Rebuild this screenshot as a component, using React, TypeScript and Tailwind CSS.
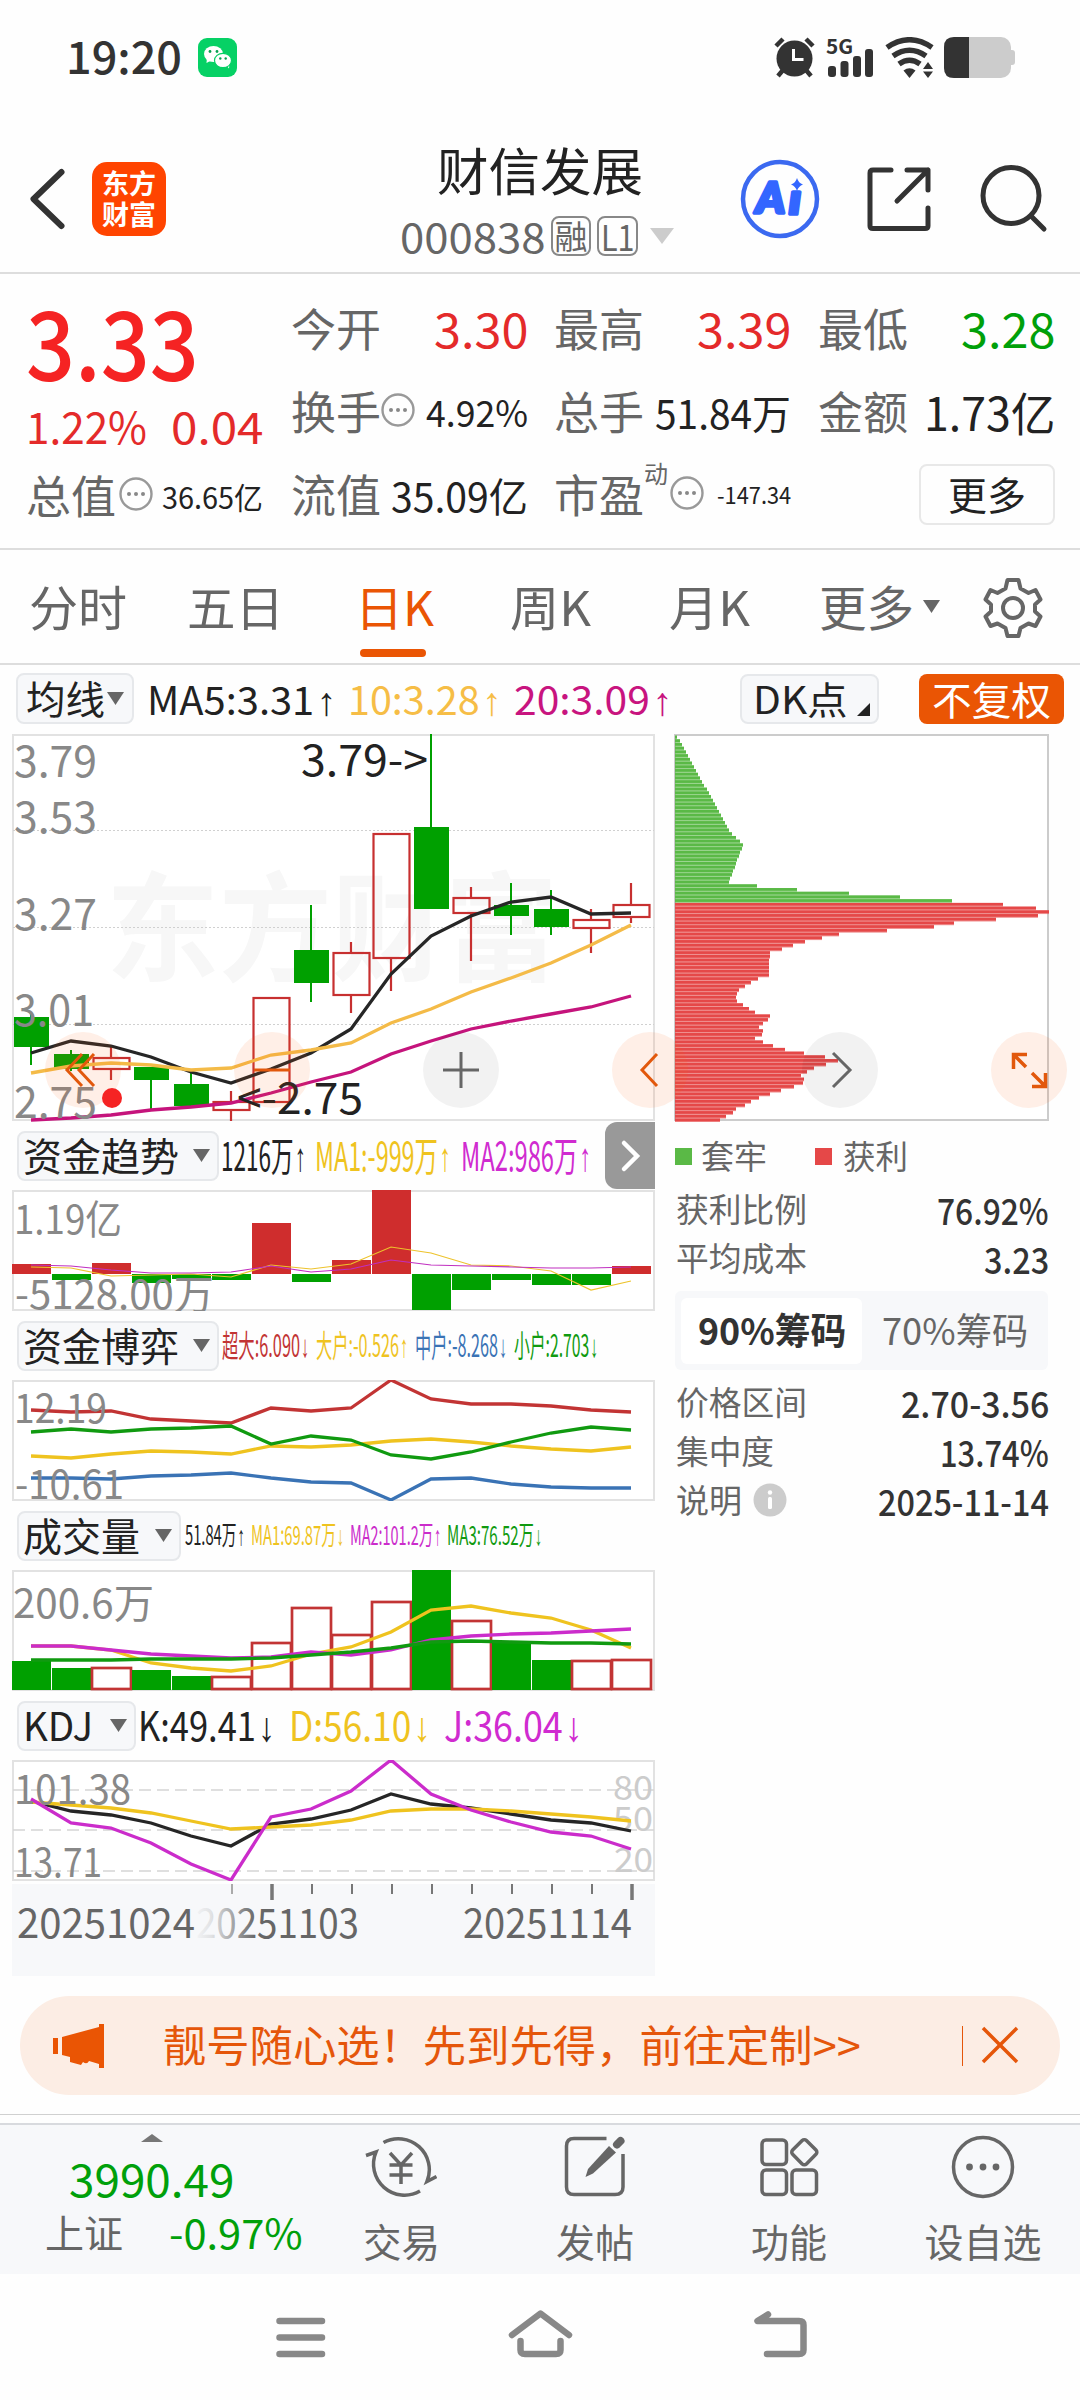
import React, { useLayoutEffect, useRef, useState } from "react";
import clsx from "clsx";

// one trading day every 40px
const STEP = 40;
const FIRST = 19;

// [high, low, top, bottom, up]
const candles: [number, number, number, number, boolean][] = [
  [279, 331, 283, 313, false],
  [316, 337, 320, 335, false],
  [313, 346, 324, 335, true],
  [333, 375, 333, 346, false],
  [336, 372, 350, 372, false],
  [357, 387, 368, 376, true],
  [264, 368, 264, 368, true],
  [171, 268, 216, 249, false],
  [208, 279, 219, 261, true],
  [100, 257, 100, 224, true],
  [0, 175, 93, 175, false],
  [153, 227, 164, 179, true],
  [149, 201, 171, 182, false],
  [156, 201, 175, 193, false],
  [175, 219, 186, 194, true],
  [149, 189, 171, 183, true],
];
const ma5 = [319, 307, 312, 323, 338, 349, 335, 319, 295, 240, 202, 182, 168, 163, 180, 179];
const ma10 = [339, 332, 329, 331, 336, 334, 321, 316, 309, 289, 275, 258, 244, 229, 211, 191];
const ma20 = [386, 384, 381, 376, 373, 369, 359, 348, 338, 320, 307, 295, 287, 280, 273, 262];

const flow = [10, -6, 11, -9, -5, -6, 51, -8, 14, 84, -36, -16, -6, -11, -11, 8];
const flowMa1 = [77, 78, 86, 85, 84, 87, 75, 79, 74, 57, 63, 75, 76, 81, 100, 91];
const flowMa2 = [75, 76, 80, 83, 83, 82, 76, 82, 79, 70, 75, 76, 77, 78, 78, 77];

const superBig = [30, 32, 31, 39, 41, 43, 28, 31, 28, 0, 19, 24, 24, 26, 30, 32];
const small = [52, 49, 52, 49, 48, 46, 64, 56, 60, 75, 79, 72, 62, 53, 47, 50];
const big = [76, 78, 74, 71, 72, 74, 66, 67, 65, 61, 59, 62, 66, 69, 71, 67];
const middle = [98, 98, 99, 96, 95, 93, 98, 102, 103, 120, 99, 98, 104, 107, 108, 108];

const volume = [91, 98, 97, 100, 106, 106, 72, 37, 64, 31, 0, 50, 72, 90, 90, 89];
const volMa1 = [76, 76, 80, 93, 98, 101, 96, 84, 77, 62, 40, 36, 43, 48, 60, 78];
const volMa2 = [76, 76, 80, 84, 86, 88, 87, 82, 85, 80, 70, 66, 64, 63, 61, 59];
const volMa3 = [90, 90, 90, 89, 89, 89, 88, 85, 82, 78, 72, 71, 72, 73, 73, 74];
const volUp = [2, 5, 6, 7, 8, 9, 11, 14, 15];

const kLine = [41, 51, 55, 63, 76, 86, 64, 59, 50, 34, 44, 48, 54, 60, 63, 71];
const dLine = [42, 45, 48, 53, 61, 69, 67, 65, 60, 51, 49, 49, 51, 54, 57, 61];
const jLine = [39, 63, 68, 83, 104, 120, 57, 49, 31, 0, 34, 50, 62, 72, 76, 89];

const trapped = [
  2, 5, 7, 9, 11, 13, 15, 17, 19, 21, 23, 25, 27, 29, 32, 34, 36, 38, 40, 42, 44, 46, 48, 50, 52, 54, 57, 61, 65, 68,
  67, 65, 64, 62, 61, 60, 58, 57, 55, 54, 82, 122, 174, 225, 277,
];
const profit = [
  328, 361, 374, 363, 321, 279, 259, 212, 164, 147, 130, 118, 107, 95, 95, 94, 94, 94, 94, 94, 83, 76, 70, 64, 62, 61,
  62, 68, 74, 80, 95, 93, 88, 84, 88, 87, 80, 88, 98, 110, 129, 150, 163, 151, 139, 132, 126, 129, 128, 119, 106, 95,
  84, 76, 70, 61, 58, 51, 45,
];

const points = (values: number[]) => values.map((v, i) => `${FIRST + i * STEP},${v}`).join(" ");

// text squeezed or stretched to the width of its box
const Fit = ({ className, children }: { className: string; children: React.ReactNode }) => {
  const box = useRef<HTMLSpanElement>(null);
  const inner = useRef<HTMLSpanElement>(null);
  const [scale, setScale] = useState(1);
  useLayoutEffect(() => {
    if (box.current && inner.current) {
      setScale(box.current.clientWidth / inner.current.offsetWidth);
    }
  }, []);
  return (
    <span ref={box} className={clsx("inline-flex shrink-0 leading-none whitespace-nowrap", className)}>
      <span
        ref={inner}
        className="inline-block shrink-0 origin-left -translate-y-[0.035em]"
        style={{ transform: `scaleX(${scale})` }}
      >
        {children}
      </span>
    </span>
  );
};

const Arrow = ({ down }: { down?: boolean }) => (
  <span className="ml-[0.06em] font-['Liberation_Sans',sans-serif]">{down ? "↓" : "↑"}</span>
);

const Line = ({ data, color, width = 3.3 }: { data: number[]; color: string; width?: number }) => (
  <polyline points={points(data)} fill="none" stroke={color} strokeWidth={width} />
);

type LabelProps = { x: number; y: number; w: number; size?: number; fill?: string; children: string };
const Label = ({ x, y, w, size = 40, fill = "#888", children }: LabelProps) => (
  <text x={x} y={y} fontSize={size} fill={fill} textLength={w} lengthAdjust="spacingAndGlyphs">
    {children}
  </text>
);

const Down = ({ className = "" }: { className?: string }) => (
  <svg className={clsx("h-[13px] w-[17px] shrink-0", className)} viewBox="0 0 17 13">
    <path d="M0 0H17L8.5 13Z" fill="#666" />
  </svg>
);

const Dots = ({ className = "" }: { className?: string }) => (
  <svg className={clsx("size-[34px] shrink-0", className)} viewBox="0 0 34 34">
    <circle cx="17" cy="17" r="15.5" fill="none" stroke="#999" strokeWidth="2.4" />
    <circle cx="10" cy="17" r="2" fill="#888" />
    <circle cx="17" cy="17" r="2" fill="#888" />
    <circle cx="24" cy="17" r="2" fill="#888" />
  </svg>
);

const StatusBar = () => (
  <div className="flex h-[115px] items-start pt-[37px] text-[#333]">
    <Fit className="-mt-[3px] ml-[66px] w-[116px] text-[45px] font-medium">19:20</Fit>
    <svg className="mt-px ml-[16px] size-[39px]" viewBox="0 0 39 39">
      <rect width="39" height="39" rx="9" fill="#06d165" />
      <path d="M9 19 8.500 25 14 22Z" fill="#fff" />
      <ellipse cx="15.500" cy="16" rx="9.500" ry="8" fill="#fff" />
      <path d="M28 27 31 30.500 31.500 25Z" fill="#fff" />
      <ellipse cx="25" cy="22.500" rx="8.500" ry="7.200" fill="#fff" stroke="#06d165" strokeWidth="1.200" />
      <g fill="#06a04f">
        <circle cx="12" cy="13.500" r="1.400" />
        <circle cx="19" cy="13.500" r="1.400" />
        <circle cx="22.300" cy="20.500" r="1.200" />
        <circle cx="27.700" cy="20.500" r="1.200" />
      </g>
    </svg>
    <svg className="ml-auto h-[41px] w-[41px]" viewBox="0 0 41 41">
      <g stroke="#333" strokeWidth="4.500" fill="none">
        <path d="M2 9 9 2M39 9 32 2M9 33 4 39M32 33 37 39" />
      </g>
      <circle cx="20.500" cy="21.500" r="18" fill="#333" />
      <path d="M19.500 12V22.500H29.500" stroke="#fff" strokeWidth="3" fill="none" />
    </svg>
    <div className="ml-[11px] flex h-[41px] w-[48px] flex-col">
      <Fit className="h-[16px] w-[27px] text-[20px] font-bold">5G</Fit>
      <svg className="-mt-[4px] ml-[2px] h-[28px] w-[46px]" viewBox="0 0 46 28">
        <g fill="#333">
          <rect x="0" y="17" width="8" height="11" rx="3" />
          <rect x="12.500" y="12" width="8" height="16" rx="3" />
          <rect x="25" y="7" width="8" height="21" rx="3" />
          <rect x="37" y="0" width="8" height="28" rx="3" />
        </g>
      </svg>
    </div>
    <svg className="ml-[11px] h-[41px] w-[50px]" viewBox="0 0 50 41">
      <g stroke="#333" strokeWidth="5.500" fill="none">
        <path d="M2 10.500Q24.500-5 47 10.500" />
        <path d="M8 19Q24.500 7.500 41 19" />
        <path d="M14 27Q24.500 19.500 35 27" />
      </g>
      <path d="M18.500 33.500Q24.500 29 30.500 33.500L24.500 41Z" fill="#333" />
      <path d="M38 32 43 25 48 32ZM38 34.500 43 41 48 34.500Z" fill="#333" />
    </svg>
    <svg className="mr-[65px] ml-[9px] h-[41px] w-[71px]" viewBox="0 0 71 41">
      <path d="M66 13h2q3 0 3 3v9q0 3-3 3h-2Z" fill="#ccc" />
      <rect width="67" height="41" rx="10" fill="#ccc" />
      <path d="M25 0H10Q0 0 0 10V31Q0 41 10 41H25Z" fill="#333" />
    </svg>
  </div>
);

const Header = () => (
  <div className="flex h-[159px] items-center border-b-2 border-[#ddd]">
    <svg className="mt-[10px] ml-[28px] h-[64px] w-[38px]" viewBox="0 0 38 64">
      <path
        d="M33.500 5 5.500 32 33.500 59"
        stroke="#333"
        strokeWidth="6"
        strokeLinecap="round"
        strokeLinejoin="round"
        fill="none"
      />
    </svg>
    <div className="mt-[10px] ml-[26px] flex h-[74px] w-[74px] flex-col items-center justify-center gap-[4px] rounded-[15px] bg-[#ff4400] text-white">
      <Fit className="w-[54px] text-[27px] font-bold">东方</Fit>
      <Fit className="w-[54px] text-[27px] font-bold">财富</Fit>
    </div>
    <div className="mt-[15px] ml-[234px] flex w-[276px] flex-col">
      <Fit className="ml-[37px] w-[206px] text-[51px] text-[#222]">财信发展</Fit>
      <div className="mt-[19px] flex h-[40px] items-center text-[#666]">
        <Fit className="w-[146px] text-[41px]">000838</Fit>
        <div className="ml-[5px] flex h-[40px] w-[40px] items-center justify-center rounded-[8px] border-2 border-[#888]">
          <Fit className="w-[33px] text-[33px]">融</Fit>
        </div>
        <div className="ml-[6px] flex h-[40px] w-[41px] items-center justify-center rounded-[8px] border-2 border-[#888]">
          <Fit className="w-[34px] text-[36px]">L1</Fit>
        </div>
        <svg className="ml-[12px] h-[16px] w-[24px]" viewBox="0 0 24 16">
          <path d="M0 0H24L12 16Z" fill="#ccc" />
        </svg>
      </div>
    </div>
    <svg className="mt-[10px] ml-[64px] size-[80px]" viewBox="0 0 80 80">
      <circle cx="40" cy="40" r="37" fill="none" stroke="#3b69f0" strokeWidth="4.500" />
      <g
        fill="#3366ff"
        stroke="#3366ff"
        strokeWidth="3.500"
        strokeLinejoin="round"
        fontFamily="Lato, sans-serif"
        fontWeight="900"
        fontStyle="italic"
      >
        <text x="16" y="54" fontSize="42" textLength="29" lengthAdjust="spacingAndGlyphs">
          A
        </text>
        <text x="49" y="55" fontSize="41" textLength="12" lengthAdjust="spacingAndGlyphs">
          ı
        </text>
      </g>
      <path d="M57 19Q58.500 24 63 25.500 58.500 27 57 32 55.500 27 51 25.500 55.500 24 57 19Z" fill="#3366ff" />
    </svg>
    <svg className="mt-[10px] ml-[46px] h-[66px] w-[66px]" viewBox="0 0 66 66">
      <g fill="none" stroke="#333" strokeWidth="5" strokeLinecap="round" strokeLinejoin="round">
        <path d="M25 4H7Q4 4 4 7V60Q4 62.500 7 62.500H59Q62 62.500 62 60V42" />
        <path d="M41 4H62V24M62 4 31 35" />
      </g>
    </svg>
    <svg className="mt-[10px] ml-[47px] h-[70px] w-[70px]" viewBox="0 0 70 70">
      <g fill="none" stroke="#333" strokeWidth="5" strokeLinecap="round">
        <circle cx="32" cy="31.500" r="28" />
        <path d="M52 52 65 65" />
      </g>
    </svg>
  </div>
);

const Cell = ({ label, extra, children }: { label: string; extra?: React.ReactNode; children: React.ReactNode }) => (
  <div className="flex h-[83px] w-[237px] items-center">
    <Fit className="w-[90px] text-[45px] text-[#666]">{label}</Fit>
    {extra}
    <div className="ml-auto flex text-[#222]">{children}</div>
  </div>
);

const Quote = () => (
  <div className="flex h-[276px] border-b-2 border-[#ddd] pt-[14px]">
    <div className="ml-[26px] flex w-[265px] flex-col">
      <div className="flex h-[109px] items-center">
        <Fit className="w-[173px] text-[96px] font-medium text-[#f52323]">3.33</Fit>
      </div>
      <div className="mt-[3px] mb-px flex h-[54px] items-center text-[44px] text-[#e42a2a]">
        <Fit className="w-[121px]">1.22%</Fit>
        <Fit className="ml-[24px] w-[93px]">0.04</Fit>
      </div>
      <Cell label="总值" extra={<Dots className="-mt-[6px] ml-[3px]" />}>
        <Fit className="w-[101px] text-[30px]">36.65亿</Fit>
      </Cell>
    </div>
    <div className="grid h-[249px] grid-cols-[263px_264px_237px]">
      <Cell label="今开">
        <Fit className="w-[94px] text-[47px] text-[#e42a2a]">3.30</Fit>
      </Cell>
      <Cell label="最高">
        <Fit className="w-[94px] text-[47px] text-[#e42a2a]">3.39</Fit>
      </Cell>
      <Cell label="最低">
        <Fit className="w-[94px] text-[47px] text-[#00a00a]">3.28</Fit>
      </Cell>
      <Cell label="换手" extra={<Dots className="-mt-[6px]" />}>
        <Fit className="w-[102px] text-[37px]">4.92%</Fit>
      </Cell>
      <Cell label="总手">
        <Fit className="w-[136px] text-[40px]">51.84万</Fit>
      </Cell>
      <Cell label="金额">
        <Fit className="w-[131px] text-[46px]">1.73亿</Fit>
      </Cell>
      <Cell label="流值">
        <Fit className="w-[137px] text-[40px]">35.09亿</Fit>
      </Cell>
      <Cell
        label="市盈"
        extra={
          <>
            <Fit className="-mt-[44px] w-[24px] text-[24px] text-[#666]">动</Fit>
            <Dots className="-mt-[6px] ml-[2px]" />
          </>
        }
      >
        <Fit className="w-[74px] text-[23px]">-147.34</Fit>
      </Cell>
      <div className="flex h-[83px] items-center justify-end">
        <button className="-mt-[2px] flex h-[61px] w-[136px] items-center justify-center rounded-[8px] border-2 border-[#e8e8e8] text-[#222]">
          <Fit className="w-[78px] text-[39px]">更多</Fit>
        </button>
      </div>
    </div>
  </div>
);

const Tabs = () => (
  <div className="flex h-[115px] items-center border-b-2 border-[#ddd] text-[48px] text-[#666]">
    <Fit className="ml-[29px] w-[98px]">分时</Fit>
    <Fit className="ml-[60px] w-[97px]">五日</Fit>
    <div className="relative ml-[71px] flex h-full items-center text-[#ea5504]">
      <Fit className="w-[79px]">日K</Fit>
      <div className="absolute bottom-[6px] left-[5px] h-[8px] w-[66px] rounded-full bg-[#ea5504]" />
    </div>
    <Fit className="ml-[76px] w-[81px]">周K</Fit>
    <Fit className="ml-[78px] w-[81px]">月K</Fit>
    <Fit className="ml-[69px] w-[95px]">更多</Fit>
    <Down className="ml-[9px]" />
    <svg className="ml-[43px] h-[62px] w-[60px]" viewBox="0 0 60 62">
      <g fill="none" stroke="#666" strokeWidth="4" strokeLinejoin="round">
        <path d="M24.500 4h11l2 8.500 8 4.500 7-3 5 9.500-5.500 5v7l5.500 5-5 9.500-7-2.500-8 4.500-2 8h-11l-2-8-8-4.500-7 2.500-5-9.500 5.500-5v-7l-5.500-5 5-9.500 7 3 8-4.500Z" />
        <circle cx="30" cy="32" r="10" />
      </g>
    </svg>
  </div>
);

const MaRow = () => (
  <div className="flex h-[69px] items-start pt-[8px]">
    <div className="ml-[16px] flex h-[51px] w-[118px] items-center rounded-[8px] border-2 border-[#e6e8eb] bg-[#f7f8fa] pl-[8px] text-[#222]">
      <Fit className="w-[79px] text-[39px]">均线</Fit>
      <Down className="ml-[2px]" />
    </div>
    <div className="mt-[2px] ml-[13px] flex h-[51px] w-[593px] items-center text-[39px]">
      <Fit className="w-[189px] text-[#222]">
        MA5:3.31
        <Arrow />
      </Fit>
      <Fit className="ml-[12px] w-[154px] text-[#f6bd46]">
        10:3.28
        <Arrow />
      </Fit>
      <Fit className="ml-[12px] w-[159px] text-[#c8147f]">
        20:3.09
        <Arrow />
      </Fit>
    </div>
    <div className="mt-px flex h-[50px] w-[139px] items-center rounded-[8px] border-2 border-[#e6e8eb] bg-[#f7f8fa] pl-[11px] text-[#222]">
      <Fit className="w-[95px] text-[38px]">DK点</Fit>
      <svg className="mt-[20px] ml-[9px] size-[13px]" viewBox="0 0 13 13">
        <path d="M13 0V13H0Z" fill="#222" />
      </svg>
    </div>
    <div className="mt-px ml-[40px] flex h-[50px] w-[145px] items-center justify-center rounded-[8px] bg-[#ea5504] text-white">
      <Fit className="w-[119px] text-[39px]">不复权</Fit>
    </div>
  </div>
);

const Pill = ({ width, text, children }: { width: string; text: string; children: string }) => (
  <div
    className={clsx(
      "flex h-[50px] shrink-0 items-center rounded-[8px] border-2 border-[#e6e8eb] bg-[#f7f8fa] pr-[7px] pl-[4px] text-[#222]",
      width
    )}
  >
    <Fit className={clsx("text-[39px]", text)}>{children}</Fit>
    <Down className="ml-auto" />
  </div>
);

const IndicatorHead = ({ children }: { children: React.ReactNode }) => (
  <div className="flex h-[69px] items-center pl-[5px]">{children}</div>
);

const Frame = ({ h, children }: { h: number; children: React.ReactNode }) => (
  <svg className={clsx("block w-[643px]", h > 200 ? "h-[388px]" : "h-[121px]")}>
    <rect x="1" y="1" width="641" height={h - 2} fill="#fff" stroke="#e2e2e2" strokeWidth="2" />
    {children}
  </svg>
);

const KChart = () => (
  <Frame h={387}>
    <text x="94" y="238" fontSize="118" fontWeight="700" fill="#f7f7f7" textLength="452" lengthAdjust="spacingAndGlyphs">
      东方财富
    </text>
    {[96, 193, 290].map((y) => (
      <path key={y} d={`M1 ${y}.5H642`} stroke="#d0d0d0" strokeDasharray="2 2" />
    ))}
    {candles.map(([high, low, top, bottom, up], i) => {
      const x = FIRST + i * STEP;
      return up ? (
        <g key={i} stroke="#c73030" strokeWidth="2.200">
          <path d={`M${x} ${high}V${top}M${x} ${bottom}V${low}`} />
          <rect x={x - 17.5} y={top} width="36" height={bottom - top} fill="none" />
        </g>
      ) : (
        <g key={i} fill="#00a000">
          <rect x={x - 1} y={high} width="2" height={low - high} />
          <rect x={x - 17} y={top} width="35" height={bottom - top} />
        </g>
      );
    })}
    <Line data={ma5} color="#262626" />
    <Line data={ma10} color="#f4bb48" />
    <Line data={ma20} color="#c5147c" />
    <Label x={2} y={43} w={83} size={44}>3.79</Label>
    <Label x={2} y={99} w={83} size={44}>3.53</Label>
    <Label x={2} y={196} w={83} size={44}>3.27</Label>
    <Label x={2} y={292} w={80} size={44}>3.01</Label>
    <Label x={2} y={384} w={83} size={44}>2.75</Label>
    <Label x={289} y={42} w={127} size={44} fill="#222">{"3.79->"}</Label>
    <Label x={225} y={380} w={126} size={44} fill="#222">{"<-2.75"}</Label>
  </Frame>
);

const FlowChart = () => (
  <Frame h={121}>
    {flow.map((v, i) => (
      <rect
        key={i}
        x={i * STEP}
        y={v > 0 ? 84 - v : 84}
        width="39"
        height={Math.abs(v)}
        fill={v > 0 ? "#cf2d2d" : "#00a000"}
      />
    ))}
    <Line data={flowMa1} color="#edc32c" width={1.2} />
    <Line data={flowMa2} color="#c02fc0" width={1.2} />
    <Label x={2} y={44} w={108}>1.19亿</Label>
    <Label x={3} y={119} w={199}>-5128.00万</Label>
  </Frame>
);

const GameChart = () => (
  <Frame h={121}>
    <Line data={superBig} color="#c23434" />
    <Line data={big} color="#efc31f" />
    <Line data={middle} color="#3a73b5" />
    <Line data={small} color="#109a10" />
    <Label x={2} y={43} w={93}>12.19</Label>
    <Label x={3} y={119} w={109}>-10.61</Label>
  </Frame>
);

const VolumeChart = () => (
  <Frame h={121}>
    {volume.map((top, i) =>
      volUp.includes(i) ? (
        <rect
          key={i}
          x={i * STEP}
          y={top + 1}
          width="39"
          height={118 - top}
          fill="#fff"
          stroke="#c23434"
          strokeWidth="2.700"
        />
      ) : (
        <rect key={i} x={i * STEP} y={top} width="39" height={120 - top} fill="#00a000" />
      )
    )}
    <Line data={volMa1} color="#efc31f" />
    <Line data={volMa2} color="#cb2ccb" />
    <Line data={volMa3} color="#109a10" />
    <Label x={1} y={48} w={141}>200.6万</Label>
  </Frame>
);

const KdjChart = () => (
  <Frame h={121}>
    {[30, 70, 111].map((y) => (
      <path key={y} d={`M1 ${y}H642`} stroke="#d5d5d5" strokeWidth="1.500" strokeDasharray="12 6" />
    ))}
    <Label x={601} y={40} w={40} size={34} fill="#ccc">80</Label>
    <Label x={601} y={71} w={40} size={34} fill="#ccc">50</Label>
    <Label x={602} y={112} w={39} size={34} fill="#ccc">20</Label>
    <Line data={kLine} color="#262626" />
    <Line data={dLine} color="#efc31f" />
    <Line data={jLine} color="#cb2ccb" />
    <Label x={2} y={44} w={117}>101.38</Label>
    <Label x={2} y={117} w={88}>13.71</Label>
  </Frame>
);

const DateAxis = () => (
  <svg className="mt-[3px] block h-[92px] w-[643px] bg-[#f7f8fa]">
    <defs>
      <linearGradient id="fade">
        <stop offset="0" stopColor="#f7f8fa" />
        <stop offset="0.3" stopColor="#f7f8fa" stopOpacity="0.850" />
        <stop offset="1" stopColor="#f7f8fa" stopOpacity="0" />
      </linearGradient>
    </defs>
    {Array.from({ length: 11 }, (_, n) => n + 5).map((i) => (
      <path
        key={i}
        d={`M${FIRST + 1 + i * STEP} 0v${i === 6 || i === 15 ? 16 : 10}`}
        stroke={i === 5 ? "#aaa" : "#777"}
        strokeWidth={i === 6 || i === 15 ? 3.5 : 2}
      />
    ))}
    <Label x={184} y={54} w={163} size={41} fill="#666">20251103</Label>
    <rect x="180" y="18" width="64" height="42" fill="url(#fade)" />
    <Label x={5} y={54} w={178} size={41} fill="#666">20251024</Label>
    <Label x={451} y={54} w={169} size={41} fill="#666">20251114</Label>
  </svg>
);

const ChipChart = () => {
  const rows = [...trapped, ...profit];
  return (
    <svg className="block h-[388px] w-[375px]">
      <rect x="1" y="1" width="373" height="385" fill="#fff" stroke="#ccc" strokeWidth="2" />
      {rows.map((w, i) => {
        const y = 1.6 + i * 3.718;
        return (
          <g key={i} fill={i < trapped.length ? "#5ab946" : "#e54848"}>
            <rect x="1" y={y} width={w} height="3.718" opacity="0.6" />
            <rect x="1" y={y} width={w} height="2.7" />
          </g>
        );
      })}
    </svg>
  );
};

type ChipRowProps = { label: string; labelW: string; value: string; valueW: string };
const ChipRow = ({ label, labelW, value, valueW }: ChipRowProps) => (
  <div className="flex h-[49px] items-center justify-between text-[33px] text-[#666]">
    <Fit className={labelW}>{label}</Fit>
    <Fit className={clsx("text-[36px] font-medium text-[#333]", valueW)}>{value}</Fit>
  </div>
);

const ChipPanel = () => (
  <div className="ml-[19px] w-[375px]">
    <ChipChart />
    <div className="flex h-[68px] items-center pl-px text-[33px] text-[#666]">
      <span className="size-[17px] bg-[#5ab946]" />
      <Fit className="ml-[9px] w-[66px]">套牢</Fit>
      <span className="ml-[48px] size-[17px] bg-[#e54848]" />
      <Fit className="ml-[11px] w-[65px]">获利</Fit>
    </div>
    <div className="-mt-[5px] pl-[2px]">
      <ChipRow label="获利比例" labelW="w-[131px]" value="76.92%" valueW="w-[112px]" />
      <ChipRow label="平均成本" labelW="w-[131px]" value="3.23" valueW="w-[65px]" />
    </div>
    <div className="mt-[8px] ml-px flex h-[79px] w-[373px] items-center rounded-[6px] bg-[#f7f8fa] p-[6px]">
      <div className="flex h-[66px] w-[181px] items-center justify-center rounded-[6px] bg-white">
        <Fit className="w-[148px] text-[37px] font-bold text-[#333]">90%筹码</Fit>
      </div>
      <div className="flex flex-1 items-center justify-center pl-[5px]">
        <Fit className="w-[146px] text-[37px] text-[#666]">70%筹码</Fit>
      </div>
    </div>
    <div className="mt-[8px] pl-[2px]">
      <ChipRow label="价格区间" labelW="w-[131px]" value="2.70-3.56" valueW="w-[148px]" />
      <ChipRow label="集中度" labelW="w-[98px]" value="13.74%" valueW="w-[109px]" />
      <div className="flex h-[49px] items-center text-[33px] text-[#666]">
        <Fit className="w-[66px]">说明</Fit>
        <svg className="-mt-px ml-[11px] size-[34px]" viewBox="0 0 34 34">
          <circle cx="17" cy="17" r="16.500" fill="#ccc" />
          <circle cx="17" cy="9.500" r="2.200" fill="#fff" />
          <rect x="15" y="14" width="4" height="12" rx="1.500" fill="#fff" />
        </svg>
        <Fit className="ml-auto w-[171px] text-[36px] font-medium text-[#333]">2025-11-14</Fit>
      </div>
    </div>
  </div>
);

// floating buttons over both charts
const ChartButtons = () => (
  <svg className="absolute top-[298px] left-0 h-[76px] w-[1080px]" viewBox="0 0 1080 76">
    {[83, 272, 650, 1029].map((x) => (
      <circle key={x} cx={x} cy="38" r="38" fill="#ff6414" fillOpacity="0.1" />
    ))}
    {[461, 840].map((x) => (
      <circle key={x} cx={x} cy="38" r="38" fill="#000" fillOpacity="0.05" />
    ))}
    <g fill="none" stroke="#e2580c" strokeWidth="3">
      <path d="M82 22 67 38 82 54M94 22 79 38 94 54M254 38H290M657 22 642 38 657 54" />
      <path d="M1027 22.500H1013.500V37M1014 23 1026 35M1032 54.500H1045.500V41M1045 54 1032 41" strokeWidth="3.500" />
    </g>
    <g fill="none" stroke="#666" strokeWidth="3">
      <path d="M443 38H479M461 20V56M833 21 850 38 833 55" />
    </g>
    <circle cx="112" cy="66" r="10" fill="#f52323" />
  </svg>
);

const Charts = () => (
  <div className="relative flex h-[1262px] pl-[12px]">
    <div className="w-[643px]">
      <KChart />
      <div className="-mt-px">
        <IndicatorHead>
          <Pill width="w-[202px]" text="w-[156px]">资金趋势</Pill>
          <div className="mt-px flex items-center text-[40px]">
            <Fit className="ml-[2px] w-[85px] text-[#222]">1216万<Arrow /></Fit>
            <Fit className="ml-[9px] w-[136px] text-[#efc31f]">MA1:-999万<Arrow /></Fit>
            <Fit className="ml-[10px] w-[130px] text-[#d02bd0]">MA2:986万<Arrow /></Fit>
          </div>
          <div className="ml-auto flex h-[67px] w-[50px] items-center justify-center rounded-l-[12px] bg-[#999]">
            <svg className="h-[34px] w-[22px]" viewBox="0 0 22 34">
              <path d="M5 4 18 17 5 30" fill="none" stroke="#fff" strokeWidth="4.500" strokeLinecap="round" />
            </svg>
          </div>
        </IndicatorHead>
      </div>
      <FlowChart />
      <IndicatorHead>
        <Pill width="w-[202px]" text="w-[156px]">资金博弈</Pill>
        <div className="mt-px flex items-center text-[31px]">
          <Fit className="ml-[3px] w-[87px] text-[#c23434]">超大:6.090<Arrow down /></Fit>
          <Fit className="ml-[7px] w-[92px] text-[#efc31f]">大户:-0.526<Arrow /></Fit>
          <Fit className="ml-[7px] w-[92px] text-[#3a73b5]">中户:-8.268<Arrow down /></Fit>
          <Fit className="ml-[7px] w-[84px] text-[#109a10]">小户:2.703<Arrow down /></Fit>
        </div>
      </IndicatorHead>
      <GameChart />
      <IndicatorHead>
        <Pill width="w-[164px]" text="w-[117px]">成交量</Pill>
        <div className="mt-px flex items-center text-[27px]">
          <Fit className="ml-[4px] w-[60px] text-[#222]">51.84万<Arrow /></Fit>
          <Fit className="ml-[6px] w-[93px] text-[#efc31f]">MA1:69.87万<Arrow down /></Fit>
          <Fit className="ml-[6px] w-[91px] text-[#cb2ccb]">MA2:101.2万<Arrow /></Fit>
          <Fit className="ml-[6px] w-[95px] text-[#109a10]">MA3:76.52万<Arrow down /></Fit>
        </div>
      </IndicatorHead>
      <VolumeChart />
      <IndicatorHead>
        <Pill width="w-[119px]" text="w-[70px]">KDJ</Pill>
        <div className="mt-px flex items-center text-[41px]">
          <Fit className="ml-[2px] w-[137px] text-[#222]">K:49.41<Arrow down /></Fit>
          <Fit className="ml-[14px] w-[142px] text-[#efc31f]">D:56.10<Arrow down /></Fit>
          <Fit className="ml-[13px] w-[139px] text-[#d02bd0]">J:36.04<Arrow down /></Fit>
        </div>
      </IndicatorHead>
      <KdjChart />
      <DateAxis />
    </div>
    <ChipPanel />
    <ChartButtons />
  </div>
);

const Banner = () => (
  <div className="mx-[20px] flex h-[99px] w-[1040px] items-center rounded-full bg-[#fcede4] text-[#e5560a]">
    <svg className="ml-[33px] h-[44px] w-[52px]" viewBox="0 0 52 44">
      <path d="M0 14H5V30H0ZM9 13 46 3V0H51V44H46V40L36 37Q34 41 30 38L28 41 17 38V33L9 31Z" fill="#ea5504" />
    </svg>
    <Fit className="ml-[58px] w-[698px] text-[43px]">靓号随心选！先到先得，前往定制&gt;&gt;</Fit>
    <span className="ml-[101px] h-[40px] w-px bg-[#e5560a]" />
    <svg className="-mt-[2px] ml-[18px] h-[38px] w-[38px]" viewBox="0 0 38 38">
      <path d="M2 2 36 36M36 2 2 36" stroke="#e5560a" strokeWidth="3.500" />
    </svg>
  </div>
);

const NavItem = ({ icon, labelW, children }: { icon: React.ReactNode; labelW: string; children: string }) => (
  <div className="flex w-[194px] flex-col items-center pt-[6px]">
    <svg className="h-[72px] w-[72px]" viewBox="0 0 72 72">
      <g fill="none" stroke="#666" strokeWidth="3.500">
        {icon}
      </g>
    </svg>
    <Fit className={clsx("mt-[19px] text-[39px] text-[#666]", labelW)}>{children}</Fit>
  </div>
);

const BottomBar = () => (
  <div className="flex h-[151px] border-t-2 border-[#d8dade] bg-[#f7f8fa]">
    <div className="relative flex w-[304px] shrink-0 flex-col pt-[32px]">
      <svg className="absolute top-[9px] left-[141px] h-[8px] w-[22px]" viewBox="0 0 22 8">
        <path d="M0 8H22L11 0Z" fill="#777" />
      </svg>
      <Fit className="ml-[69px] w-[165px] text-[45px] text-[#00a00a]">3990.49</Fit>
      <div className="mt-[10px] flex items-center">
        <Fit className="ml-[45px] w-[78px] text-[39px] text-[#666]">上证</Fit>
        <Fit className="ml-[46px] w-[134px] text-[41px] text-[#00a00a]">-0.97%</Fit>
      </div>
    </div>
    <NavItem
      labelW="w-[77px]"
      icon={
        <>
          <path d="M18.500 11.500A31 31 0 0 1 62 50.500L71.500 45.500" />
          <path d="M55 60A31 31 0 0 1 11 21L1 24.500" />
          <path d="M25 22 36 34 47 22M24.500 34H47.500M24.500 44H47.500M36 34V53" />
        </>
      }
    >
      交易
    </NavItem>
    <NavItem
      labelW="w-[78px]"
      icon={
        <>
          <path d="M47.500 7.500H15Q7.500 7.500 7.500 15V56Q7.500 63.500 15 63.500H56Q64 63.500 64 56V23" />
          <path d="M58 13.500 61.500 10" strokeWidth="8" strokeLinecap="round" />
          <path d="M50 15 57 21.500 34 42.500 26.500 46 29 38Z" fill="#666" stroke="none" />
        </>
      }
    >
      发帖
    </NavItem>
    <NavItem
      labelW="w-[76px]"
      icon={
        <>
          <rect x="9" y="9" width="24.500" height="24.500" rx="4" />
          <rect x="9" y="39" width="24.500" height="24.500" rx="4" />
          <rect x="39" y="39" width="24.500" height="24.500" rx="4" />
          <rect x="41.500" y="11.500" width="19.500" height="19.500" rx="3" transform="rotate(45 51.300 21.300)" />
        </>
      }
    >
      功能
    </NavItem>
    <NavItem
      labelW="w-[117px]"
      icon={
        <>
          <circle cx="36" cy="36" r="29.500" />
          <g fill="#666" stroke="none">
            <circle cx="22.500" cy="36" r="3.400" />
            <circle cx="36" cy="36" r="3.400" />
            <circle cx="49" cy="36" r="3.400" />
          </g>
        </>
      }
    >
      设自选
    </NavItem>
  </div>
);

const SystemNav = () => (
  <div className="flex h-[126px] items-start justify-center pt-[34px]">
    <svg className="h-[52px] w-[540px]" viewBox="270 2308 540 52">
      <g fill="none" stroke="#888" strokeWidth="6.500" strokeLinecap="round" strokeLinejoin="round">
        <path d="M279.500 2321H322M279.500 2337.500H322M279.500 2354H322" />
        <path d="M512 2335 540.500 2313.500 569 2335M520.500 2341V2350Q520.500 2354 525 2354H556Q560.500 2354 560.500 2350V2341" />
        <path d="M768 2314.500 757.500 2321H799Q803.500 2321 803.500 2325V2350Q803.500 2354 799 2354H767" />
      </g>
    </svg>
  </div>
);

const App = () => {
  return (
    <div className="h-[2400px] w-[1080px] overflow-hidden bg-[#fefefe] font-['Noto_Sans_CJK_SC',sans-serif]">
      <StatusBar />
      <Header />
      <Quote />
      <Tabs />
      <MaRow />
      <Charts />
      <Banner />
      <div className="mt-[19px] h-[9px] border-t border-[#d0d0d0]" />
      <BottomBar />
      <SystemNav />
    </div>
  );
};

export default App;
